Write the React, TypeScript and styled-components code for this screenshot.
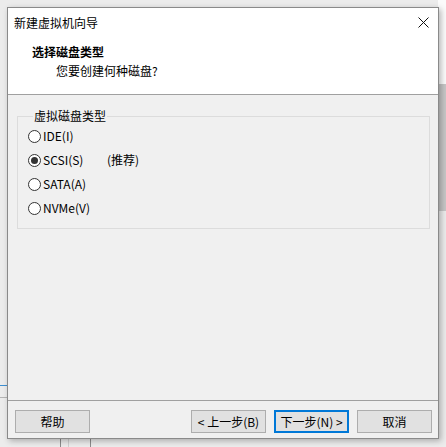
import React from "react";
import styled, { createGlobalStyle } from "styled-components";

const GlobalStyle = createGlobalStyle`
  html, body {
    margin: 0;
    padding: 0;
  }
  body {
    font-family: "Noto Sans CJK SC", "Microsoft YaHei", sans-serif;
    font-size: 12px;
    color: #000;
  }
`;

// the desktop behind the dialog, with a bit of the other app peeking out
const Desktop = styled.div`
  width: 446px;
  height: 447px;
  box-sizing: border-box;
  padding: 7px 0 0 7px;
  background:
    linear-gradient(to bottom, #fbfbfb 0 84px, #c6c6c6 84px 211px, #ececec 211px) right top / 8px 100% no-repeat,
    linear-gradient(#3d8fd1, #3d8fd1) 0 385px / 7px 1px no-repeat,
    linear-gradient(#b4b4b4, #b4b4b4) 0 397px / 7px 1px no-repeat,
    linear-gradient(#8c8c8c, #8c8c8c) 60px 439px / 1px 8px no-repeat,
    linear-gradient(#d0d0d0, #d0d0d0) 68px 439px / 1px 8px no-repeat,
    linear-gradient(#8c8c8c, #8c8c8c) 90px 439px / 1px 8px no-repeat,
    #ececec;
  overflow: hidden;
`;

const Dialog = styled.div`
  width: 432px;
  height: 432px;
  box-sizing: border-box;
  border: 1px solid #8a8a8a;
  background: #f0f0f0;
  box-shadow: 2px 2px 6px rgba(0, 0, 0, 0.28);
  display: flex;
  flex-direction: column;
`;

const Header = styled.div`
  height: 87px;
  box-sizing: border-box;
  background: #fff;
  border-bottom: 1px solid #a0a0a0;
  display: flex;
  flex-direction: column;
`;

const TitleBar = styled.div`
  height: 29px;
  display: flex;
  align-items: center;
  justify-content: space-between;
  padding: 0 7px 0 6px;
`;

const Title = styled.span`
  line-height: 16px;
`;

const Close = styled.span`
  width: 16px;
  height: 16px;
  display: flex;
  align-items: center;
  justify-content: center;
`;

const Heading = styled.div`
  margin: 7px 0 0 24px;
  font-weight: bold;
  line-height: 16px;
`;

const SubHeading = styled.div`
  margin: 3px 0 0 48px;
  line-height: 16px;
`;

const Body = styled.div`
  flex: 1;
  padding: 13px 8px 0 9px;
`;

const Group = styled.fieldset`
  margin: 0;
  padding: 0 0 8px 10px;
  border: 1px solid #dcdcdc;
  min-width: 0;
`;

const Legend = styled.legend`
  margin-left: 5px;
  padding: 0 1px;
  line-height: 16px;
`;

const Option = styled.label`
  height: 24px;
  display: flex;
  align-items: center;
`;

const Circle = styled.span<{ checked?: boolean }>`
  width: 13px;
  height: 13px;
  box-sizing: border-box;
  border-radius: 50%;
  border: 1px solid #333;
  background: #fff;
  margin-right: 2px;
  display: flex;
  align-items: center;
  justify-content: center;
  &::after {
    content: "";
    width: 7px;
    height: 7px;
    border-radius: 50%;
    background: ${(p) => (p.checked ? "#333" : "transparent")};
  }
`;

const OptionText = styled.span`
  line-height: 16px;
  min-width: 64px;
`;

const Hint = styled.span`
  line-height: 16px;
`;

const Footer = styled.div`
  height: 38px;
  box-sizing: border-box;
  border-top: 1px solid #a0a0a0;
  padding: 9px 6px 0 7px;
  display: flex;
  gap: 8px;
`;

const Spacer = styled.div`
  flex: 1;
`;

const Button = styled.button<{ primary?: boolean }>`
  width: 75px;
  height: 23px;
  box-sizing: border-box;
  padding: 0;
  font-family: inherit;
  font-size: 12px;
  line-height: 16px;
  color: #000;
  background: #e1e1e1;
  border: 1px solid ${(p) => (p.primary ? "#0078d7" : "#adadad")};
  box-shadow: ${(p) => (p.primary ? "inset 0 0 0 1px #0078d7" : "none")};
`;

const options = [
  { label: "IDE(I)" },
  { label: "SCSI(S)", hint: "(推荐)", checked: true },
  { label: "SATA(A)" },
  { label: "NVMe(V)" },
];

export default function App() {
  return (
    <>
      <GlobalStyle />
      <Desktop>
        <Dialog>
          <Header>
            <TitleBar>
              <Title>新建虚拟机向导</Title>
              <Close>
                <svg width="11" height="11" viewBox="0 0 11 11">
                  <path d="M0.5 0.5 L10.5 10.5 M10.5 0.5 L0.5 10.5" stroke="#111" strokeWidth="1" />
                </svg>
              </Close>
            </TitleBar>
            <Heading>选择磁盘类型</Heading>
            <SubHeading>您要创建何种磁盘?</SubHeading>
          </Header>
          <Body>
            <Group>
              <Legend>虚拟磁盘类型</Legend>
              {options.map((o) => (
                <Option key={o.label}>
                  <Circle checked={o.checked} />
                  <OptionText>{o.label}</OptionText>
                  {o.hint && <Hint>{o.hint}</Hint>}
                </Option>
              ))}
            </Group>
          </Body>
          <Footer>
            <Button>帮助</Button>
            <Spacer />
            <Button>&lt; 上一步(B)</Button>
            <Button primary>下一步(N) &gt;</Button>
            <Button>取消</Button>
          </Footer>
        </Dialog>
      </Desktop>
    </>
  );
}
